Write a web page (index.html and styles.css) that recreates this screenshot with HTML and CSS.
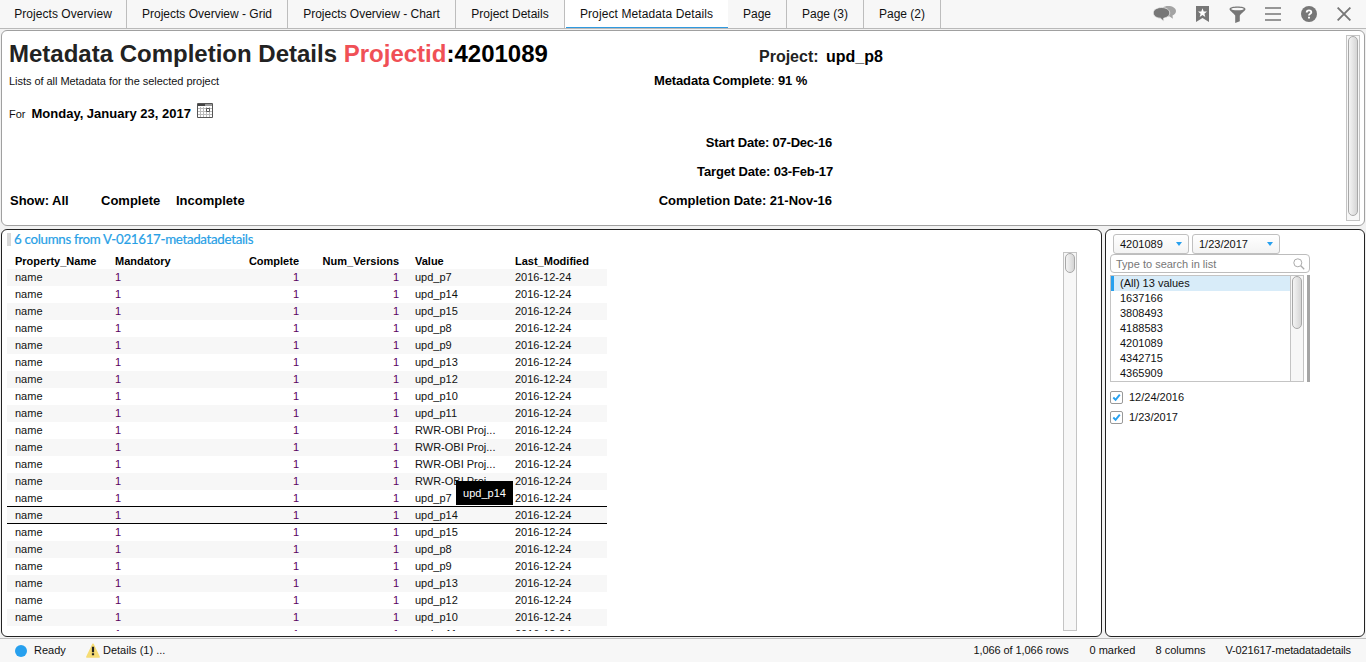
FILE: index.html
```html
<!DOCTYPE html>
<html lang="en">
<head>
<meta charset="utf-8">
<title>Project Metadata Details</title>
<link rel="stylesheet" href="styles.css">
</head>
<body>
<header class="topbar">
  <nav class="tabs">
    <a class="tab t1">Projects Overview</a>
    <a class="tab t2">Projects Overview - Grid</a>
    <a class="tab t3">Projects Overview - Chart</a>
    <a class="tab t4">Project Details</a>
    <a class="tab t5 active"><span>Project Metadata Details</span></a>
    <a class="tab t6">Page</a>
    <a class="tab t7">Page (3)</a>
    <a class="tab t8">Page (2)</a>
  </nav>
  <div class="tools">
    <svg class="ico-chat" width="24" height="16" viewBox="0 0 24 16"><path fill="#a3a3a3" d="M15 0c4.600 0 8 2.100 8 5 0 2.200-1.500 3.700-3.500 4.500l.4 3.200-3.600-2.500H15c-4 0-7-2-7-5s3-5.200 7-5.200z"/><path fill="#777" stroke="#f7f7f7" stroke-width=".7" d="M8.500 1.500c4.600 0 8.200 2.300 8.200 5.400 0 2.700-2.400 4.600-6 5.200L10.700 15.200 7.400 12.200C3.200 12 .3 9.700.3 6.900.3 3.800 3.900 1.500 8.500 1.500z"/></svg>
    <svg class="ico-mark" width="13" height="16" viewBox="0 0 13 16"><path fill="#777" d="M0 0h13v16l-6.500-4L0 16z"/><path fill="#fff" d="M6.500 2.300l1.200 3.100 3.300.2-2.600 2.100.9 3.200-2.800-1.800-2.800 1.800.9-3.200L2 5.600l3.300-.2z"/></svg>
    <svg class="ico-filter" width="17" height="17" viewBox="0 0 17 17"><path fill="#777" d="M.5 3.200C.5 1.300 4 .5 8.500.5s8 .8 8 2.700c0 1.200-4.300 4.300-5.700 6.200v5.900L6.200 17V9.400C4.800 7.500.5 4.400.5 3.200z"/><ellipse cx="8.500" cy="3" rx="6.300" ry="1.300" fill="#f7f7f7"/></svg>
    <svg class="ico-menu" width="16" height="14" viewBox="0 0 16 14"><path stroke="#777" stroke-width="1.700" d="M0 1h16M0 7h16M0 13h16"/></svg>
    <svg class="ico-help" width="16" height="16" viewBox="0 0 16 16"><circle cx="8" cy="8" r="8" fill="#777"/><path fill="none" stroke="#fff" stroke-width="1.900" d="M5.700 6.400C5.700 3.700 10.300 3.700 10.300 6.200 10.300 7.900 8 7.600 8 9.600M8 10.700v1.900"/></svg>
    <svg class="ico-close" width="14" height="14" viewBox="0 0 14 14"><path stroke="#777" stroke-width="1.900" d="M.6.6l12.800 12.800M13.400.6L.6 13.400"/></svg>
  </div>
</header>

<main class="page">
  <section class="panel summary">
    <div class="intro">
      <h1 class="title">Metadata Completion Details <span class="accent">Projectid</span><span class="ink">:4201089</span></h1>
      <p class="lede">Lists of all Metadata for the selected project</p>
      <div class="for"><span>For</span><b>Monday, January 23, 2017</b>
        <svg width="16" height="15" viewBox="0 0 16 15"><path fill="#fff" stroke="#555" d="M.5.5h15v14H.5z"/><path fill="#999" d="M1 1h14v2H1z"/><path fill="#444" d="M1 1h7v2H1z"/><path stroke="#bbb" d="M1 5.500h14M1 8.500h14M1 11.500h14M3.500 4v10M6.500 4v10M9.500 4v10M12.500 4v10"/><path fill="#fff" stroke="#555" d="M9.500 5.500h3v3h-3z"/></svg>
      </div>
      <div class="show"><b class="s1">Show: All</b><b class="s2">Complete</b><b class="s3">Incomplete</b></div>
    </div>
    <div class="facts">
      <div class="project">Project: <span class="ink">upd_p8</span></div>
      <div class="complete"><b>Metadata Complete</b>: <b>91 %</b></div>
      <div class="date start">Start Date: 07-Dec-16</div>
      <div class="date target">Target Date: 03-Feb-17</div>
      <div class="date done">Completion Date: 21-Nov-16</div>
    </div>
    <div class="scroll scroll-top"><i></i></div>
  </section>

  <div class="lower">
    <section class="panel dark data">
      <div class="content">
        <h2 class="caption"><span>6 columns from V-021617-metadatadetails</span></h2>
        <div class="clip">
        <table class="grid">
          <thead><tr><th>Property_Name</th><th>Mandatory</th><th class="n">Complete</th><th class="n">Num_Versions</th><th>Value</th><th>Last_Modified</th></tr></thead>
          <tbody>
          <tr><td>name</td><td>1</td><td>1</td><td>1</td><td>upd_p7</td><td>2016-12-24</td></tr>
          <tr><td>name</td><td>1</td><td>1</td><td>1</td><td>upd_p14</td><td>2016-12-24</td></tr>
          <tr><td>name</td><td>1</td><td>1</td><td>1</td><td>upd_p15</td><td>2016-12-24</td></tr>
          <tr><td>name</td><td>1</td><td>1</td><td>1</td><td>upd_p8</td><td>2016-12-24</td></tr>
          <tr><td>name</td><td>1</td><td>1</td><td>1</td><td>upd_p9</td><td>2016-12-24</td></tr>
          <tr><td>name</td><td>1</td><td>1</td><td>1</td><td>upd_p13</td><td>2016-12-24</td></tr>
          <tr><td>name</td><td>1</td><td>1</td><td>1</td><td>upd_p12</td><td>2016-12-24</td></tr>
          <tr><td>name</td><td>1</td><td>1</td><td>1</td><td>upd_p10</td><td>2016-12-24</td></tr>
          <tr><td>name</td><td>1</td><td>1</td><td>1</td><td>upd_p11</td><td>2016-12-24</td></tr>
          <tr><td>name</td><td>1</td><td>1</td><td>1</td><td>RWR-OBI Proj...</td><td>2016-12-24</td></tr>
          <tr><td>name</td><td>1</td><td>1</td><td>1</td><td>RWR-OBI Proj...</td><td>2016-12-24</td></tr>
          <tr><td>name</td><td>1</td><td>1</td><td>1</td><td>RWR-OBI Proj...</td><td>2016-12-24</td></tr>
          <tr><td>name</td><td>1</td><td>1</td><td>1</td><td>RWR-OBI Proj...</td><td>2016-12-24</td></tr>
          <tr class="ruled"><td>name</td><td>1</td><td>1</td><td>1</td><td>upd_p7</td><td>2016-12-24</td></tr>
          <tr class="ruled"><td>name</td><td>1</td><td>1</td><td>1</td><td class="tipcell">upd_p14<span class="tip">upd_p14</span></td><td>2016-12-24</td></tr>
          <tr><td>name</td><td>1</td><td>1</td><td>1</td><td>upd_p15</td><td>2016-12-24</td></tr>
          <tr><td>name</td><td>1</td><td>1</td><td>1</td><td>upd_p8</td><td>2016-12-24</td></tr>
          <tr><td>name</td><td>1</td><td>1</td><td>1</td><td>upd_p9</td><td>2016-12-24</td></tr>
          <tr><td>name</td><td>1</td><td>1</td><td>1</td><td>upd_p13</td><td>2016-12-24</td></tr>
          <tr><td>name</td><td>1</td><td>1</td><td>1</td><td>upd_p12</td><td>2016-12-24</td></tr>
          <tr><td>name</td><td>1</td><td>1</td><td>1</td><td>upd_p10</td><td>2016-12-24</td></tr>
          <tr><td>name</td><td>1</td><td>1</td><td>1</td><td>upd_p11</td><td>2016-12-24</td></tr>
          </tbody>
        </table>
        </div>
      </div>
      <div class="scroll scroll-data"><i></i></div>
    </section>

    <aside class="panel dark filters">
      <div class="drops">
        <div class="drop d1"><span>4201089</span><i></i></div>
        <div class="drop d2"><span>1/23/2017</span><i></i></div>
      </div>
      <div class="search"><span>Type to search in list</span>
        <svg width="12" height="12" viewBox="0 0 12 12"><circle cx="4.800" cy="4.800" r="4" fill="none" stroke="#aaa"/><path stroke="#aaa" stroke-width="1.300" d="M7.800 7.800l3.400 3.400"/></svg>
      </div>
      <div class="listwrap">
        <div class="list">
          <ul>
            <li class="sel">(All) 13 values</li><li>1637166</li><li>3808493</li><li>4188583</li><li>4201089</li><li>4342715</li><li>4365909</li>
          </ul>
          <div class="scroll scroll-list"><i></i></div>
        </div>
      </div>
      <div class="check"><svg width="13" height="13" viewBox="0 0 13 13"><rect x=".5" y=".5" width="12" height="12" rx="1.500" fill="#fff" stroke="#999"/><path fill="none" stroke="#27a0ee" stroke-width="1.900" d="M3.300 6.500l2.300 2.300L9.800 3.600"/></svg><span>12/24/2016</span></div>
      <div class="check"><svg width="13" height="13" viewBox="0 0 13 13"><rect x=".5" y=".5" width="12" height="12" rx="1.500" fill="#fff" stroke="#999"/><path fill="none" stroke="#27a0ee" stroke-width="1.900" d="M3.300 6.500l2.300 2.300L9.800 3.600"/></svg><span>1/23/2017</span></div>
    </aside>
  </div>
</main>

<footer class="status">
  <i class="dot"></i><span class="ready">Ready</span>
  <svg class="warn" width="14" height="15" viewBox="0 0 14 15"><path fill="#f6dc74" stroke="#f6dc74" stroke-width="1.500" stroke-linejoin="round" d="M7 1.200L13.200 14H.8z"/><path stroke="#222" stroke-width="2.200" d="M7 3.800v5.400M7 10.300v2"/></svg>
  <span class="details">Details (1) ...</span>
  <span class="rows">1,066 of 1,066 rows</span><span class="marked">0 marked</span><span class="cols">8 columns</span><span class="source">V-021617-metadatadetails</span>
</footer>
</body>
</html>
```
FILE: styles.css
```css
* { box-sizing: border-box; }
body { margin: 0; width: 1366px; height: 662px; overflow: hidden; background: #f1f1f1; display: flex; flex-direction: column; font: 11px/15px "Liberation Sans", Arial, sans-serif; color: #111; white-space: nowrap; }
h1, h2, p, ul { margin: 0; padding: 0; }
svg { display: block; flex: none; }

.topbar { height: 29px; flex: none; display: flex; justify-content: space-between; background: #f7f7f7; border-bottom: 1px solid #b9b9b9; }
.tabs { display: flex; height: 28px; }
.tab { font-size: 12px; line-height: 28px; height: 28px; border-right: 1px solid #bdbdbd; text-align: center; }
.t1 { width: 127px; letter-spacing: .06px; } .t2 { width: 161px; } .t3 { width: 168px; } .t4 { width: 109px; }
.t5 { width: 163px; letter-spacing: .1px; } .t6 { width: 59px; } .t7 { width: 77px; } .t8 { width: 77px; }
.tab.active { background: #fff; border-right: 0; padding: 0 0 0 1px; }
.active span { display: block; height: 28px; border-bottom: 1px solid #2f9ae0; padding-right: 1px; }
.tools { display: flex; align-items: center; height: 28px; padding-right: 15px; }
.ico-chat { margin-right: 19px; }
.ico-mark { margin-right: 20px; }
.ico-filter { margin-right: 19px; }
.ico-menu { margin-right: 20px; }
.ico-help { margin-right: 20px; }

.page { padding: 1px 1px 0; flex: 1; }
.panel { background: #fff; border: 1px solid #a0a0a0; border-radius: 6px; }
.dark { border-color: #222; }
.ink { color: #000; }

.summary { width: 1364px; height: 196px; display: flex; }
.intro { width: 640px; padding: 8px 0 0 7px; }
.title { font-size: 24px; line-height: 30px; color: #222; }
.accent { color: #f05056; }
.lede { margin-top: 5px; letter-spacing: -.045px; }
.for { display: flex; align-items: center; margin-top: 15px; height: 20px; }
.for b { font-size: 13px; margin: -1px 6px 0 6px; color: #000; }
.for svg { margin-top: -7px; }
.show { display: flex; margin: 69px 0 0 1px; font-size: 13px; color: #000; }
.s1 { width: 91px; } .s2 { width: 75px; }
.facts { width: 704px; padding: 16px 0 0 12px; font-size: 13px; font-weight: bold; color: #000; }
.project { font-size: 16px; line-height: 20px; margin-left: 105px; color: #222; word-spacing: 3px; }
.complete { margin-top: 6px; font-weight: normal; letter-spacing: -.13px; }
.date { width: 178px; text-align: right; height: 15px; }
.start { margin-top: 47px; letter-spacing: -.22px; } .target, .done { margin-top: 14px; }
.target { width: 179px; letter-spacing: -.15px; }

.scroll { background: #f7f7f7; border: 1px solid #c4c4c4; flex: none; }
.scroll i { display: block; margin: 0 1px; border: 1px solid #a8a8a8; border-radius: 6px; background: linear-gradient(90deg, #f4f4f4, #d5d5d5); }
.scroll-top { width: 14px; height: 186px; margin-top: 4px; }
.scroll-top i { height: 180px; }

.lower { display: flex; gap: 3px; margin-top: 3px; height: 408px; }
.data { width: 1101px; display: flex; }
.content { width: 1061px; padding-left: 5px; }
.caption { height: 22px; padding-top: 3px; }
.caption span { display: block; border-left: 4px solid #d8d8d8; height: 13px; padding-left: 3px; font: 13.300px/13px Lato, "Open Sans", sans-serif; letter-spacing: -.3px; color: #27a0e6; -webkit-text-stroke: .2px #27a0e6; }
.clip { height: 379px; overflow: hidden; }
.grid { width: 600px; table-layout: fixed; border-collapse: collapse; line-height: 15px; }
.grid th { width: 100px; height: 17px; padding: 2px 0 0 8px; text-align: left; color: #000; }
.grid th.n { text-align: right; padding: 2px 8px 0 0; }
.grid td { height: 17px; padding: 0 0 1px 8px; }
.grid tbody tr:nth-child(odd) { background: #f7f7f7; }
.grid td:nth-child(2), .grid td:nth-child(3), .grid td:nth-child(4) { color: #5a005f; }
.grid td:nth-child(3), .grid td:nth-child(4) { text-align: right; padding: 0 8px 1px 0; }
.grid .ruled td { box-shadow: inset 0 -1px #000; }
.tipcell { position: relative; }
.tip { position: absolute; left: 49px; top: -26px; width: 57px; height: 24px; line-height: 24px; background: #000; color: #fff; text-align: center; z-index: 2; }
.scroll-data { width: 14px; height: 379px; margin-top: 22px; }
.scroll-data i { height: 20px; }

.filters { width: 260px; padding: 4px 0 0 4px; }
.drops { display: flex; gap: 3px; padding-left: 3px; }
.drop { height: 20px; border: 1px solid #c0c0c0; border-radius: 3px; background: linear-gradient(#fff, #f3f3f3); display: flex; justify-content: space-between; align-items: center; padding: 0 6px; }
.d1 { width: 76px; } .d2 { width: 88px; }
.drop i { border: 3px solid transparent; border-top: 4px solid #27a0ee; border-bottom: 0; }
.search { width: 200px; height: 19px; border: 1px solid #bdbdbd; border-radius: 4px; display: flex; align-items: center; justify-content: space-between; padding: 1px 4px 0 5px; color: #777; }
.listwrap { width: 200px; height: 107px; margin-top: 2px; border-right: 3px solid #a5a5a5; }
.list { width: 194px; height: 107px; border: 1px solid #c4c4c4; display: flex; }
.list ul { width: 179px; list-style: none; }
.list li { height: 15px; padding-left: 9px; }
.list li.sel { background: #d8ecf9; border-left: 3px solid #27a0ee; padding-left: 6px; }
.scroll-list { width: 13px; border-width: 0 0 0 1px; }
.scroll-list i { height: 53px; }
.check { display: flex; align-items: center; gap: 6px; height: 20px; }
.listwrap + .check { margin-top: 5px; }

.status { height: 24px; flex: none; border-top: 1px solid #bdbdbd; background: #f7f7f7; display: flex; align-items: center; padding: 0 15px; }
.dot { width: 12px; height: 12px; border-radius: 50%; background: #27a0ee; margin-right: 7px; }
.ready { width: 52px; }
.warn { margin-right: 3px; }
.details { margin-right: auto; }
.rows { width: 116px; letter-spacing: -.08px; } .marked { width: 66px; } .cols { width: 70px; }
.source { letter-spacing: -.12px; }
```
